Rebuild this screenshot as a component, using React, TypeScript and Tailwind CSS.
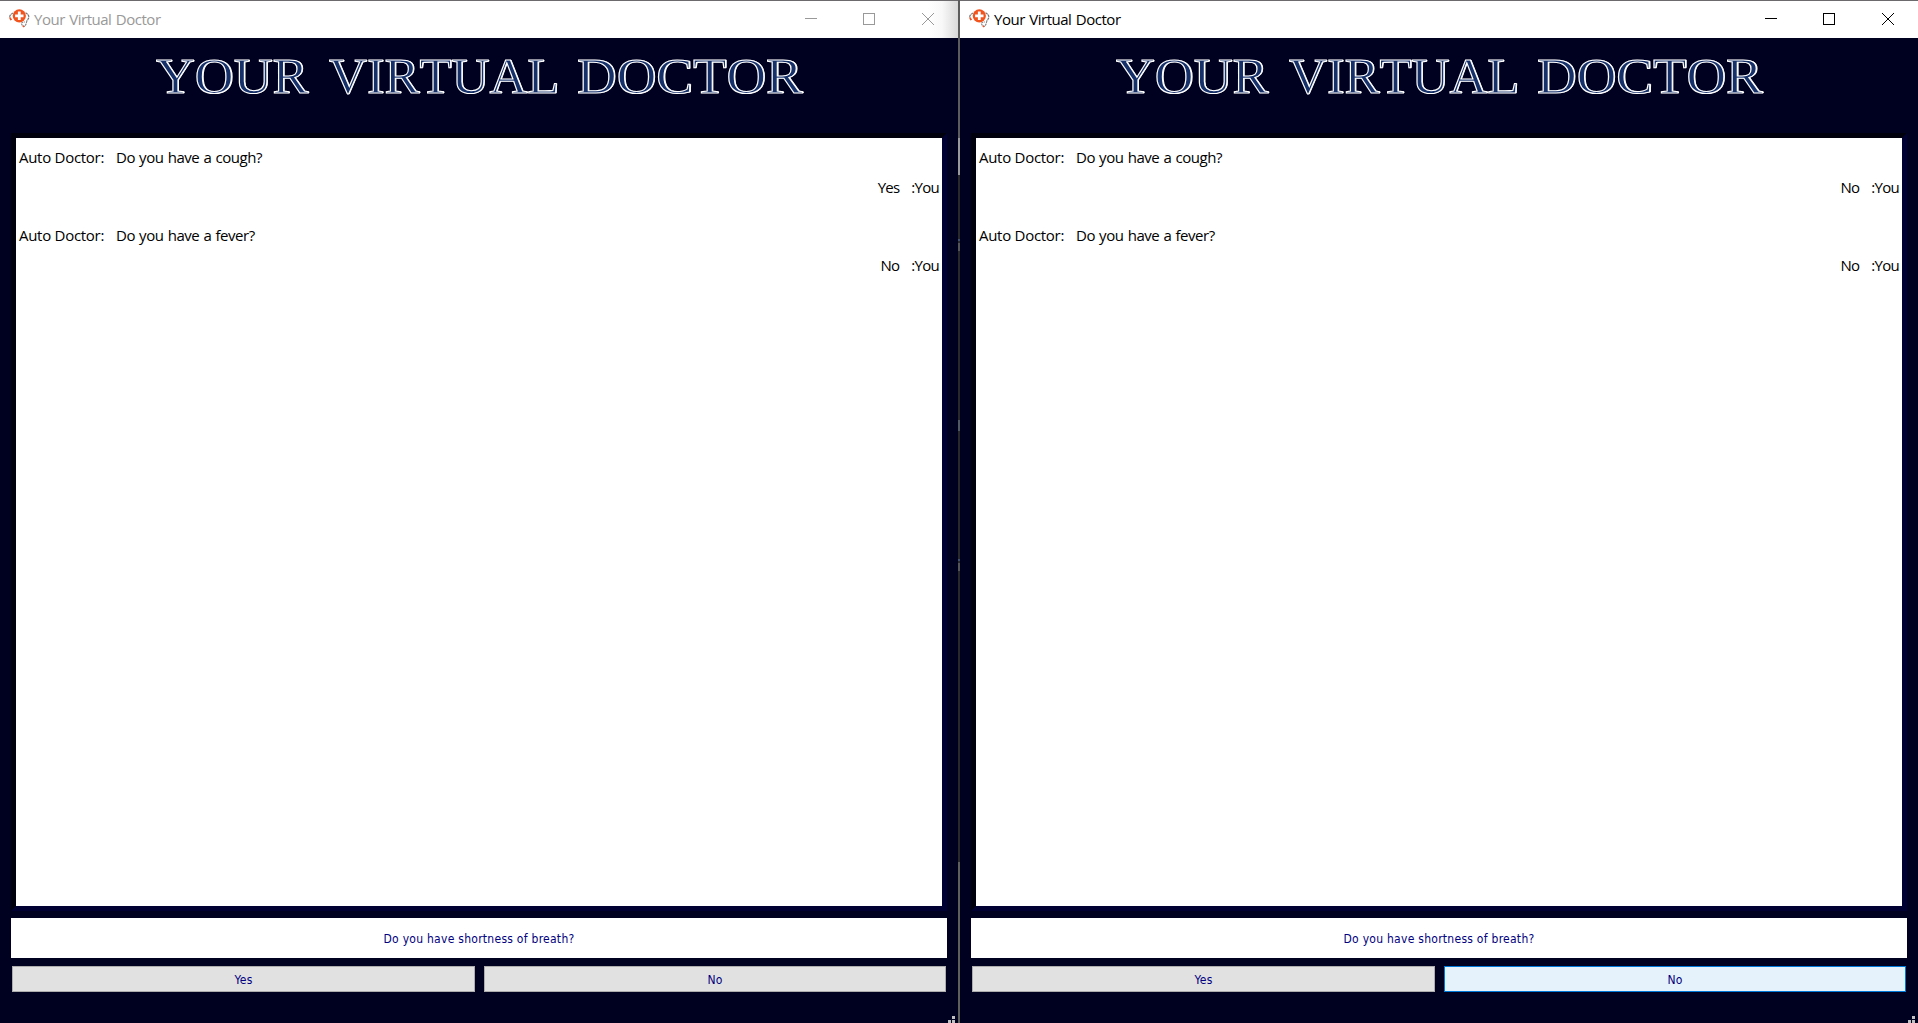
import React from "react";

type WindowProps = { answers: [string, string]; active: boolean };

function DoctorIcon() {
  return (
    <svg className="-mt-px ml-[9px] h-5 w-[21px] shrink-0" viewBox="0 0 21 20" fill="none">
      <path d="M4.2 4C2 5 .8 6.3.6 7.8M16.5 3.8c2.3 1.2 3.6 2.8 3.3 4.8-.3 1.5-1.4 2.2-2 3.6" stroke="#777" strokeWidth="1.2" strokeDasharray="2.5 .6" />
      <path d="M17.5 12.2c.3 2-.8 4.4-2.6 5.3-1.4-.8-2.4-2-2.5-3.3.6-1 2.2-1 3.4-1.5" stroke="#888" strokeWidth="1.1" strokeDasharray="2 .6" />
      <path d="M.7 8.2l1 2.3 1.1-.4M15.2 18l-1.4-1.2" stroke="#e9552a" strokeWidth="1.5" />
      <circle cx="10.3" cy="6.8" r="6.6" fill="#f2541d" />
      <path d="M10.3 2.6V11M6.1 6.8h8.4" stroke="#fff" strokeWidth="2.8" />
    </svg>
  );
}

function TitleBar({ active }: { active: boolean }) {
  return (
    <header className={active ? "flex h-[37px] shrink-0 items-center bg-white text-black" : "flex h-[37px] shrink-0 items-center bg-[linear-gradient(to_right,#fff_928px,#f8f8f8_942px,#d9d9d9_958px)] text-[#999]"}>
      <DoctorIcon />
      <span className="-mt-0.5 ml-1 whitespace-nowrap font-['Open_Sans',sans-serif] text-[15px] leading-5 tracking-[-0.48px] [word-spacing:1px]">Your Virtual Doctor</span>
      <div className="-mt-px ml-auto flex items-center">
        <svg className="mr-[46px] h-3 w-3" viewBox="0 0 12 12" stroke="currentColor" shapeRendering="crispEdges"><path d="M0 5.5h12" /></svg>
        <svg className="mr-[47px] h-3 w-3" viewBox="0 0 12 12" stroke="currentColor" fill="none" shapeRendering="crispEdges"><path d="M.5.5h11v11H.5z" /></svg>
        <svg className="mr-[24px] h-3 w-3" viewBox="0 0 12 12" stroke="currentColor"><path d="M0 0l12 12M12 0L0 12" /></svg>
      </div>
    </header>
  );
}

function Heading() {
  const word = "inline-block origin-left whitespace-nowrap";
  return (
    <h1 className="flex h-[95px] shrink-0 pl-[156px] pt-[9px] font-['Liberation_Serif',serif] text-[50px] leading-[58px] text-[#16306a] [-webkit-text-stroke:1.1px_white] [font-kerning:none] [text-shadow:1px_0_0_white]">
      <span className={`${word} w-[173px] scale-x-[1.075]`}>YOUR</span>
      <span className={`${word} w-[248px] scale-x-[1.05]`}>VIRTUAL</span>
      <span className={`${word} scale-x-[1.098]`}>DOCTOR</span>
    </h1>
  );
}

function Exchange({ question, answer }: { question: string; answer: string }) {
  return (
    <div className="h-[78px] font-['Open_Sans',sans-serif] text-[15px] leading-[30px] text-black">
      <p className="flex whitespace-nowrap pl-[3px]">
        <span className="w-[97px] tracking-[-0.28px]">Auto Doctor:</span>
        <span className="tracking-[-0.43px] [word-spacing:0.6px]">{question}</span>
      </p>
      <p className="flex justify-end whitespace-nowrap pr-[3px]">
        <span className="tracking-[-0.8px]">{answer}</span>
        <span className="ml-[12px] tracking-[-0.7px]">:You</span>
      </p>
    </div>
  );
}

function SizeGrip() {
  return (
    <svg className="ml-auto mr-[3px] mt-auto h-[7px] w-[7px]" viewBox="0 0 7 7" fill="#c0c0c0" shapeRendering="crispEdges">
      <path d="M4 0h3v3H4zM0 4h3v3H0zM4 4h3v3H4z" />
    </svg>
  );
}

function DoctorWindow({ answers, active }: WindowProps) {
  const button = "h-[26px] border pt-px text-center leading-[24px]";
  return (
    <section className="flex h-[1023px] w-[958px] shrink-0 flex-col overflow-hidden border-t border-[#6c6a6c] bg-[#000120]">
      <TitleBar active={active} />
      <Heading />
      <div className="mx-[11px] h-[778px] shrink-0 border-[5px] border-b-[#000033] border-l-[#00000d] border-r-[#000033] border-t-[#00000d] bg-white pt-1">
        <Exchange question="Do you have a cough?" answer={answers[0]} />
        <Exchange question="Do you have a fever?" answer={answers[1]} />
      </div>
      <div className="mx-[11px] mt-[7px] h-10 shrink-0 bg-white pt-px text-center font-['DejaVu_Sans_Condensed','DejaVu_Sans',sans-serif] text-[12px] leading-10 tracking-[0.27px] text-[#000080]">
        Do you have shortness of breath?
      </div>
      <div className="mx-3 mt-2 flex shrink-0 gap-[9px] font-['DejaVu_Sans_Condensed','DejaVu_Sans',sans-serif] text-[12px] tracking-[0.27px] text-[#000080]">
        <button className={`${button} w-[463px] border-[#adadad] bg-[#e1e1e1]`}>Yes</button>
        <button className={active ? `${button} w-[462px] border-[#0078d7] bg-[#e5f1fb]` : `${button} w-[462px] border-[#adadad] bg-[#e1e1e1]`}>No</button>
      </div>
      <SizeGrip />
    </section>
  );
}

function Divider() {
  return (
    <div className="flex w-0.5 shrink-0 flex-col bg-[#292929]">
      <div className="h-[138px] bg-[#5c5c5c]" />
      <div className="h-[37px] bg-[#999]" />
      <div className="mt-[64px] h-[2px] bg-[#405068]" />
      <div className="mt-[2px] h-[8px] bg-[#555]" />
      <div className="mt-[169px] h-[11px] bg-[#505860]" />
      <div className="mt-[128px] h-[2px] bg-[#405068]" />
      <div className="mt-[2px] h-[8px] bg-[#555]" />
      <div className="mt-auto h-[161px] bg-[#5f5f5a]" />
    </div>
  );
}

export default function App() {
  return (
    <main className="flex h-[1023px] w-[1918px] overflow-hidden">
      <DoctorWindow answers={["Yes", "No"]} active={false} />
      <Divider />
      <DoctorWindow answers={["No", "No"]} active />
    </main>
  );
}
